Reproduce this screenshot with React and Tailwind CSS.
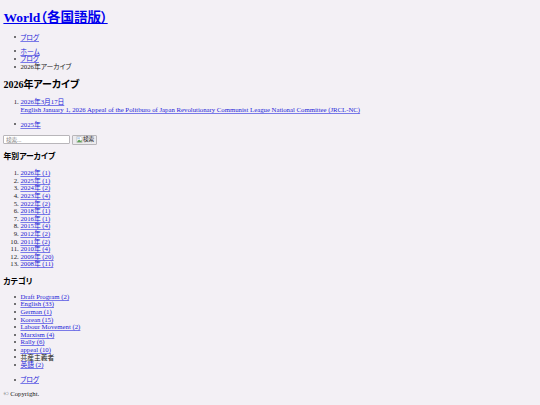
import React from 'react';

const years = ['2026年 (1)', '2025年 (1)', '2024年 (2)', '2023年 (4)', '2022年 (2)', '2018年 (1)', '2016年 (1)', '2015年 (4)', '2012年 (2)', '2011年 (2)', '2010年 (4)', '2009年 (20)', '2008年 (11)'];
const categories = ['Draft Program (2)', 'English (33)', 'German (1)', 'Korean (15)', 'Labour Movement (2)', 'Marxism (4)', 'Rally (6)', 'appeal (10)'];

const Link = ({ children }) => (
  <a href="#" className="text-[#1c1cd8] underline underline-offset-[1px] [text-decoration-skip-ink:none] decoration-[#7a7ae8]">{children}</a>
);

// browser disc sits too far left at this small size, so draw the dot ourselves
const Item = ({ children }) => (
  <li className="flex items-center before:content-[''] before:shrink-0 before:w-[2px] before:h-[2px] before:rounded-full before:bg-[#444] before:-ml-[6.4px] before:mr-[4.4px]">
    <span>{children}</span>
  </li>
);

const App = () => {
  return (
    <div className="min-h-[405px] bg-[#f3f0f5] px-[3.4px] pt-[9.5px] text-[6.75px] leading-[7.6px] text-[#1a1a1a] [font-feature-settings:'palt'] font-['Liberation_Serif','Noto_Sans_CJK_JP',serif]">
      <h1 className="text-[13.5px] leading-[15px] font-bold">
        <a href="#" className="text-[#0000ee] underline">World（各国語版）</a>
      </h1>

      <ul className="pl-[17px] mt-[9px]">
        <Item><Link>ブログ</Link></Item>
      </ul>

      <ul className="pl-[17px] mt-[6.5px]">
        <Item><Link>ホーム</Link></Item>
        <Item><Link>ブログ</Link></Item>
        <Item>2026年アーカイブ</Item>
      </ul>

      <h2 className="text-[10px] leading-[11.5px] font-bold text-black mt-[8.5px]">2026年アーカイブ</h2>

      <ol className="list-decimal pl-[17px] mt-[8px]">
        <li>
          <Link>2026年3月17日</Link>
          <br />
          <Link>English January 1, 2026 Appeal of the Politburo of Japan Revolutionary Communist League National Committee (JRCL-NC)</Link>
        </li>
      </ol>

      <ul className="pl-[17px] mt-[7px]">
        <Item><Link>2025年</Link></Item>
      </ul>

      <form className="flex items-center gap-[1.5px] mt-[6.5px]">
        <input
          type="text"
          placeholder="検索..."
          className="w-[67px] h-[9px] px-[1.5px] bg-white border border-[#b8b6ba] rounded-[1px] text-[5.6px] placeholder:text-[#8a8a8a] outline-none"
        />
        <button type="button" className="flex items-center w-[25.5px] h-[10px] pl-[3px] bg-[#ecebee] border border-[#b8b6ba] rounded-[1px] text-[5.6px] leading-none">
          <svg width="7" height="7" viewBox="0 0 16 16" className="shrink-0">
            <path d="M2 1h9l3 3v11H2z" fill="#fff" stroke="#9a9a9a" />
            <path d="M3 12l4-4 3 3 3-2v5H3z" fill="#5fa05a" />
            <path d="M3 3h6v4H3z" fill="#b9d3f2" />
          </svg>
          <span>検索</span>
        </button>
      </form>

      <h3 className="text-[7.9px] leading-[9px] font-bold text-black mt-[7.5px]">年別アーカイブ</h3>

      <ol className="list-decimal pl-[17px] mt-[8px]">
        {years.map((year) => (
          <li key={year}><Link>{year}</Link></li>
        ))}
      </ol>

      <h3 className="text-[7.9px] leading-[9px] font-bold text-black mt-[9px]">カテゴリ</h3>

      <ul className="pl-[17px] mt-[7px]">
        {categories.map((cat) => (
          <Item key={cat}><Link>{cat}</Link></Item>
        ))}
        <Item>共産主義者</Item>
        <Item><Link>英語 (2)</Link></Item>
      </ul>

      <ul className="pl-[17px] mt-[7px]">
        <Item><Link>ブログ</Link></Item>
      </ul>

      <p className="mt-[7px]">© Copyright.</p>
    </div>
  );
};

export default App;
